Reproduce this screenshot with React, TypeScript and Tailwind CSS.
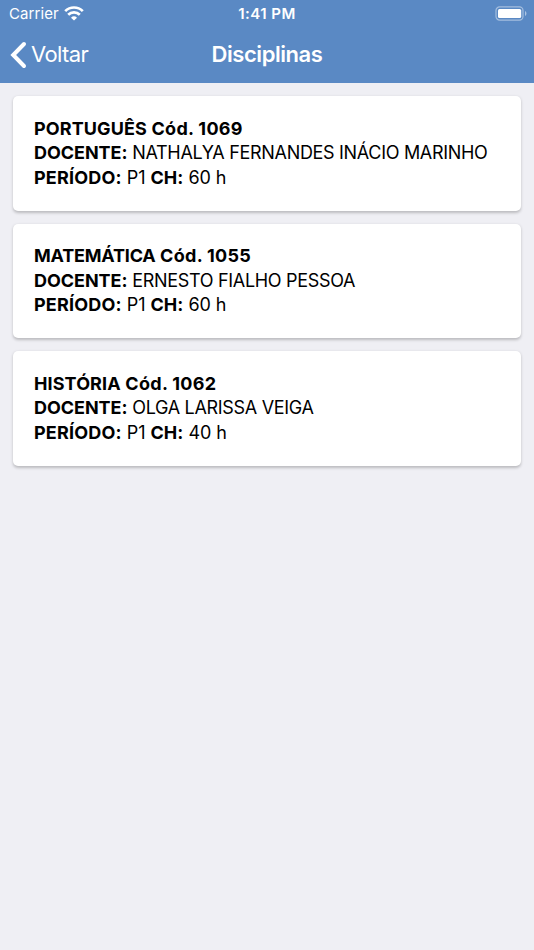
type Course = {
  name: string;
  code: string;
  teacher: string;
  period: string;
  hours: number;
};

const courses: Course[] = [
  { name: "PORTUGUÊS", code: "1069", teacher: "NATHALYA FERNANDES INÁCIO MARINHO", period: "P1", hours: 60 },
  { name: "MATEMÁTICA", code: "1055", teacher: "ERNESTO FIALHO PESSOA", period: "P1", hours: 60 },
  { name: "HISTÓRIA", code: "1062", teacher: "OLGA LARISSA VEIGA", period: "P1", hours: 40 },
];

function StatusBar() {
  return (
    <div className="grid grid-cols-3 items-center h-7 pl-[9px] pr-[7px] text-[15px]">
      <div className="flex items-center gap-[5px]">
        <span className="tracking-[0.1px]">Carrier</span>
        <svg className="-mt-px" width="20" height="15" viewBox="0 0 20 15" fill="none" stroke="currentColor" strokeWidth="2.7">
          <path d="M1.2 5.1a12.6 12.6 0 0 1 17.6 0" />
          <path d="M4.2 8.8a8.2 8.2 0 0 1 11.6 0" />
          <path d="M10 14.6 7 11.7a4.3 4.3 0 0 1 6 0Z" fill="currentColor" stroke="none" />
        </svg>
      </div>
      <span className="pr-[2px] text-center font-semibold tracking-[0.45px]">1:41 PM</span>
      <svg className="-mt-px justify-self-end" width="32" height="15" viewBox="0 0 32 15">
        <rect x="1" y="0.9" width="27" height="13.2" rx="3.6" fill="none" stroke="#fff" strokeOpacity="0.45" strokeWidth="1.2" />
        <rect x="3" y="3" width="23.2" height="9" rx="1.5" fill="#fff" />
        <path d="M30 5c1.9.8 1.9 4.2 0 5Z" fill="#fff" fillOpacity="0.5" />
      </svg>
    </div>
  );
}

function Header() {
  return (
    <header className="h-[83px] bg-[#5a89c4] text-white">
      <StatusBar />
      <div className="grid grid-cols-3 items-center h-[53px]">
        <button className="flex items-center gap-1 pl-[10px] text-[22px] tracking-[-0.6px]">
          <svg width="17" height="28" viewBox="0 0 17 28" fill="none" stroke="currentColor" strokeWidth="4" strokeLinecap="round">
            <path d="M14 3 3.2 14 14 25" />
          </svg>
          <span>Voltar</span>
        </button>
        <h1 className="text-center text-[22px] font-semibold tracking-[-0.45px]">Disciplinas</h1>
      </div>
    </header>
  );
}

function CourseCard({ course }: { course: Course }) {
  return (
    <li className="h-[114.5px] rounded-[5px] bg-white px-[21px] pt-[20.6px] text-[18px] leading-[24.5px] shadow-[0_1.5px_3px_rgba(0,0,0,0.22)]">
      <p className="font-bold tracking-[0.3px]">
        <span className={course.name.length > 9 ? "tracking-[-0.2px]" : "tracking-[0.1px]"}>{course.name}</span> Cód. {course.code}
      </p>
      <p className="whitespace-nowrap tracking-[-0.31px]">
        <b className="tracking-[-0.05px]">DOCENTE:</b> {course.teacher}
      </p>
      <p className="tracking-[-0.1px]">
        <b className="tracking-[0.2px]">PERÍODO:</b> {course.period} <b className="tracking-[0.1px]">CH:</b> {course.hours} h
      </p>
    </li>
  );
}

export default function App() {
  return (
    <div className="min-h-screen bg-[#efeff4] font-[Inter,sans-serif] text-black">
      <Header />
      <ul className="flex flex-col gap-[13px] p-[13px]">
        {courses.map((course) => (
          <CourseCard key={course.code} course={course} />
        ))}
      </ul>
    </div>
  );
}
